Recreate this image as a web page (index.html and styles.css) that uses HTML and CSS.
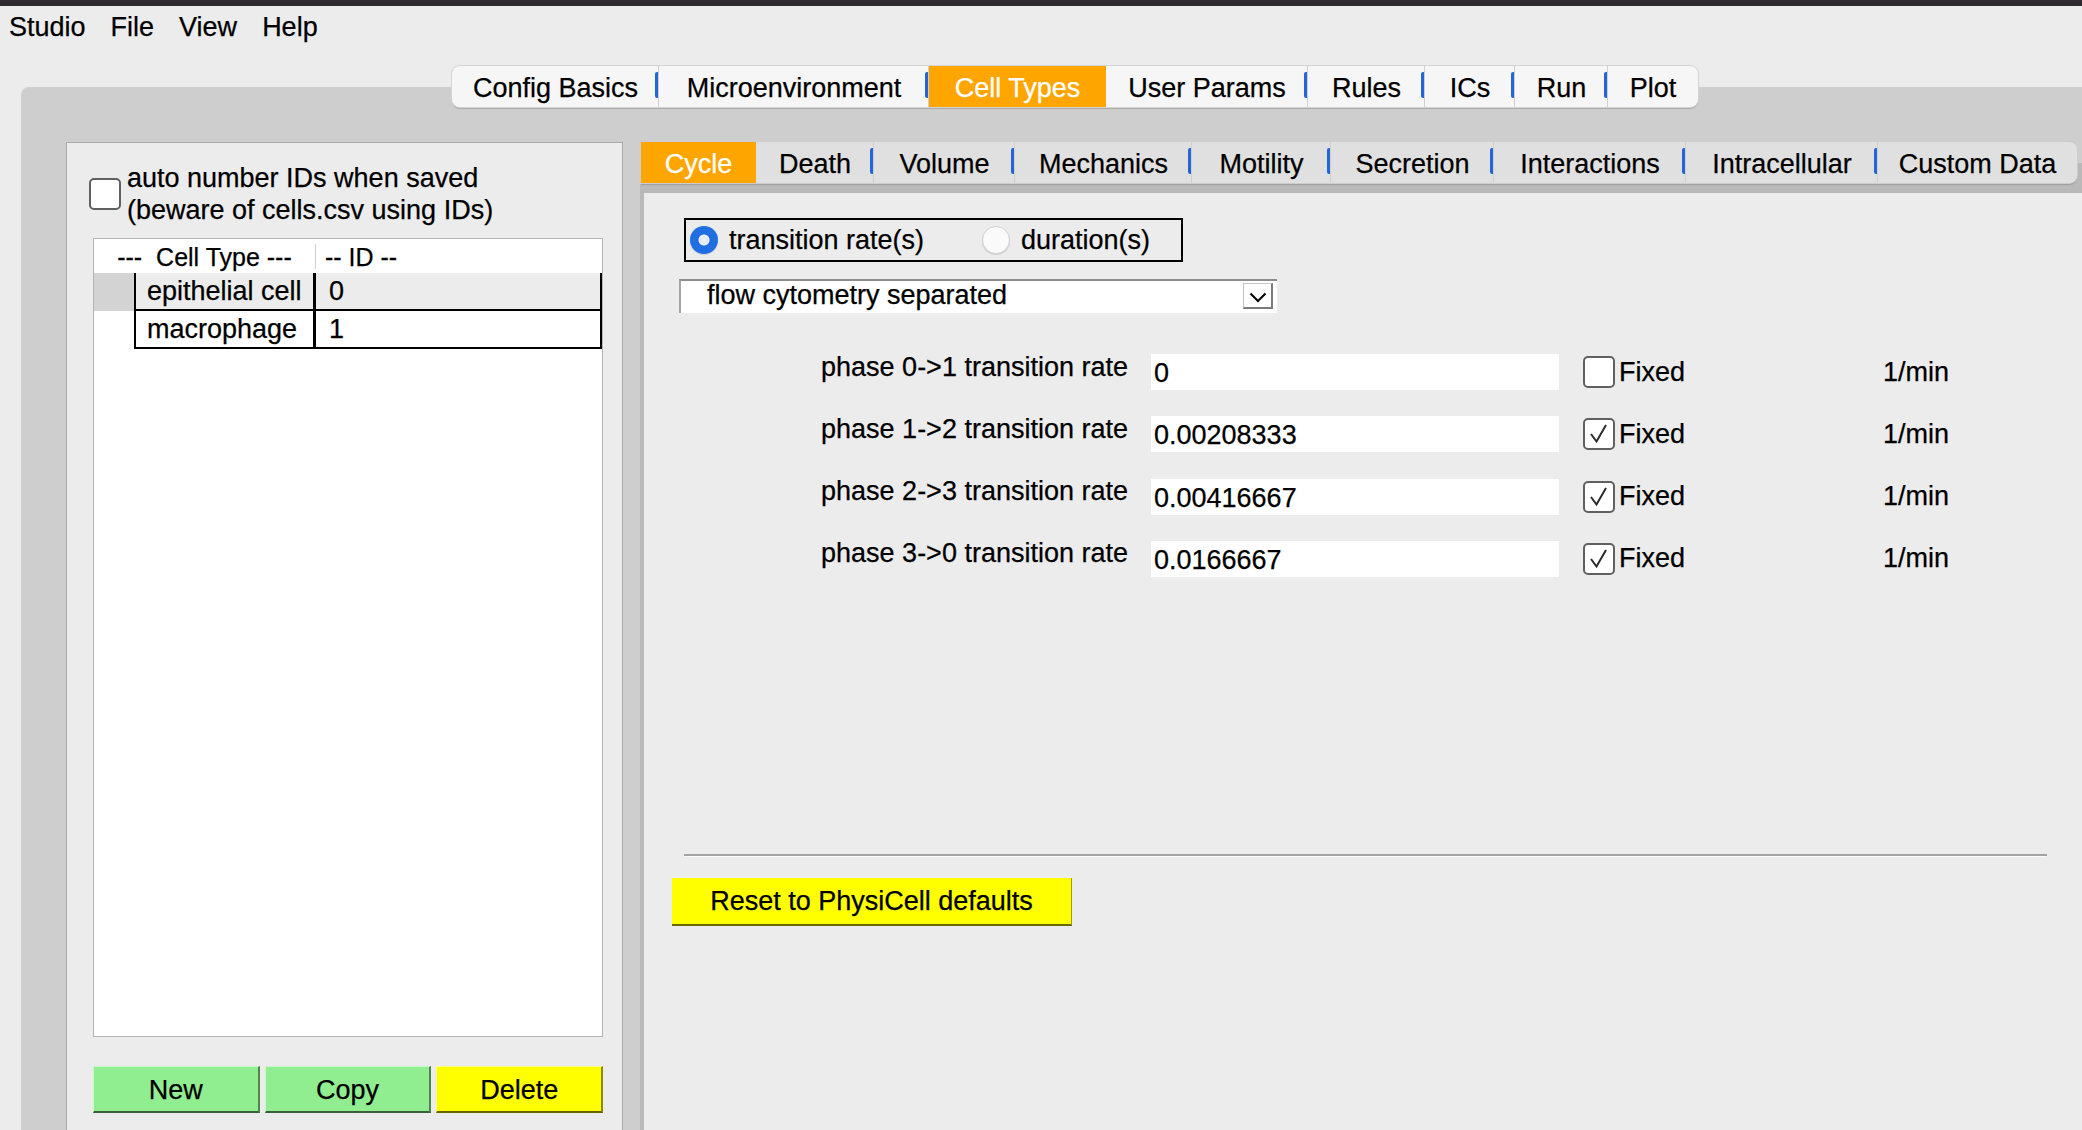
FILE: index.html
```html
<!DOCTYPE html>
<html>
<head>
<meta charset="utf-8">
<link rel="stylesheet" href="styles.css">
</head>
<body>
<div class="topstrip"></div>
<div class="menubar"><span>Studio</span><span>File</span><span>View</span><span>Help</span></div>
<div class="workspace">
  <div class="maintabs">
    <div class="tab sep w207">Config Basics</div>
    <div class="tab sep w270">Microenvironment</div>
    <div class="tab active w177">Cell Types</div>
    <div class="tab sep w202">User Params</div>
    <div class="tab sep w117">Rules</div>
    <div class="tab sep w90">ICs</div>
    <div class="tab sep w93">Run</div>
    <div class="tab w90">Plot</div>
  </div>
  <div class="frame">
    <div class="leftpanel">
      <div class="autorow">
        <div class="cbox"></div>
        <div class="autolabel">auto number IDs when saved<br>(beware of cells.csv using IDs)</div>
      </div>
      <div class="table">
        <div class="thead">
          <div class="hcell h1">---&nbsp; Cell Type ---</div>
          <div class="hcell h2">-- ID --</div>
        </div>
        <div class="trow selrow">
          <div class="gutter"></div>
          <div class="cell c1">epithelial cell</div>
          <div class="cell c2">0</div>
        </div>
        <div class="trow">
          <div class="gutter"></div>
          <div class="cell c1">macrophage</div>
          <div class="cell c2">1</div>
        </div>
      </div>
      <div class="btnrow">
        <div class="btn green">New</div>
        <div class="btn green">Copy</div>
        <div class="btn yellow">Delete</div>
      </div>
    </div>
    <div class="rightpanel">
      <div class="subhead">
        <div class="subtabs">
          <div class="tab active w115">Cycle</div>
          <div class="tab sep w118">Death</div>
          <div class="tab sep w141">Volume</div>
          <div class="tab sep w177">Mechanics</div>
          <div class="tab sep w139">Motility</div>
          <div class="tab sep w163">Secretion</div>
          <div class="tab sep w192">Interactions</div>
          <div class="tab sep w192">Intracellular</div>
          <div class="tab w199">Custom Data</div>
        </div>
      </div>
      <div class="content">
        <div class="radiobox">
          <div class="opt opt1"><span class="radio on"></span><span class="optlabel">transition rate(s)</span></div>
          <div class="opt"><span class="radio"></span><span class="optlabel">duration(s)</span></div>
        </div>
        <div class="combo">
          <span class="combotext">flow cytometry separated</span>
          <span class="arrowbox"><svg width="18" height="11" viewBox="0 0 18 11"><path d="M1.5 1.5 L9 9 L16.5 1.5" fill="none" stroke="#000" stroke-width="2"/></svg></span>
        </div>
        <div class="rows">
          <div class="prow">
            <div class="plabel">phase 0-&gt;1 transition rate</div>
            <div class="pinput">0</div>
            <div class="fixed"><span class="cbox"></span><span class="fixedlabel">Fixed</span></div>
            <div class="unit">1/min</div>
          </div>
          <div class="prow">
            <div class="plabel">phase 1-&gt;2 transition rate</div>
            <div class="pinput">0.00208333</div>
            <div class="fixed"><span class="cbox"><svg width="28" height="28" viewBox="0 0 28 28"><path d="M6 14 L11.5 21.5 L21 5" fill="none" stroke="#2a2a2a" stroke-width="2"/></svg></span><span class="fixedlabel">Fixed</span></div>
            <div class="unit">1/min</div>
          </div>
          <div class="prow">
            <div class="plabel">phase 2-&gt;3 transition rate</div>
            <div class="pinput">0.00416667</div>
            <div class="fixed"><span class="cbox"><svg width="28" height="28" viewBox="0 0 28 28"><path d="M6 14 L11.5 21.5 L21 5" fill="none" stroke="#2a2a2a" stroke-width="2"/></svg></span><span class="fixedlabel">Fixed</span></div>
            <div class="unit">1/min</div>
          </div>
          <div class="prow">
            <div class="plabel">phase 3-&gt;0 transition rate</div>
            <div class="pinput">0.0166667</div>
            <div class="fixed"><span class="cbox"><svg width="28" height="28" viewBox="0 0 28 28"><path d="M6 14 L11.5 21.5 L21 5" fill="none" stroke="#2a2a2a" stroke-width="2"/></svg></span><span class="fixedlabel">Fixed</span></div>
            <div class="unit">1/min</div>
          </div>
        </div>
        <div class="hline"></div>
        <div class="resetbtn">Reset to PhysiCell defaults</div>
      </div>
    </div>
  </div>
</div>
</body>
</html>
```

FILE: styles.css
```css
* { box-sizing: border-box; }
html, body { margin: 0; height: 1130px; overflow: hidden; }
body {
  background: #ececec;
  font-family: "Liberation Sans", Arial, sans-serif;
  font-size: 27px;
  color: #000;
  -webkit-text-stroke: 0.25px currentColor;
}
.topstrip { height: 6px; background: #2e2b2f; }
.menubar {
  height: 42px;
  display: flex;
  gap: 25px;
  padding: 6px 0 0 9px;
  line-height: 30px;
}
.workspace { padding-top: 18px; }

/* tabs */
.maintabs, .subtabs {
  display: flex;
  height: 41px;
  overflow: hidden;
}
.maintabs {
  margin-left: 452px;
  width: 1246px;
  position: relative;
  z-index: 2;
  background: #f6f6f6;
  border-radius: 8px;
  box-shadow: 0 0 0 1px #d4d4d4, 0 2px 1px rgba(0,0,0,0.18);
}
.subtabs {
  margin-left: 1px;
  width: 1436px;
  background: #e0e0e0;
  border-radius: 0 8px 8px 0;
  box-shadow: 0 0 0 1px #cdcdcd, 0 2px 1px rgba(0,0,0,0.15);
}
.tab {
  position: relative;
  display: flex;
  align-items: center;
  justify-content: center;
  height: 100%;
  line-height: 30px;
  padding-top: 2px;
  white-space: nowrap;
  flex: none;
}
.tab.sep::after {
  content: "";
  position: absolute;
  right: 1px;
  top: 6px;
  bottom: 9px;
  width: 3px;
  background: #2465d8;
  border-radius: 2px 0 0 2px;
}
.tab.sep::before {
  content: "";
  position: absolute;
  right: 0;
  top: 0;
  bottom: 0;
  width: 1px;
  background: #cfcfcf;
}
.tab.active { background: #ffa500; color: #fff; }
.w90 { width: 90px; } .w93 { width: 93px; } .w115 { width: 115px; } .w117 { width: 117px; }
.w118 { width: 118px; } .w139 { width: 139px; } .w141 { width: 141px; } .w163 { width: 163px; }
.w177 { width: 177px; } .w192 { width: 192px; } .w199 { width: 199px; } .w202 { width: 202px; }
.w207 { width: 207px; } .w270 { width: 270px; }

/* frame */
.frame {
  margin: -20px 0 0 21px;
  background: #cecece;
  border-top-left-radius: 8px;
  padding: 55px 0 0 45px;
  display: flex;
  gap: 17px;
  height: 1043px;
}

/* left panel */
.leftpanel {
  width: 557px;
  height: 1000px;
  flex: none;
  border: 1px solid #a9a9a9;
  background: #ececec;
  padding: 0 19px 0 22px;
}
.autorow {
  display: flex;
  align-items: flex-start;
  margin-top: 35px;
}
.cbox {
  width: 32px;
  height: 32px;
  flex: none;
  border: 2px solid #606060;
  border-radius: 5px;
  background: #fff;
  display: flex;
  align-items: center;
  justify-content: center;
}
.autolabel {
  margin: -16px 0 0 6px;
  line-height: 32px;
}
.table {
  margin: 12px 0 0 4px;
  width: 510px;
  height: 799px;
  border: 1px solid #b5b5b5;
  background: #fff;
}
.thead {
  height: 34px;
  display: flex;
  align-items: center;
}
.hcell { height: 25px; line-height: 26px; font-size: 25px; white-space: nowrap; }
.h1 { width: 221px; text-align: center; }
.h2 { flex: 1; padding-left: 9px; border-left: 1px solid #cfcfcf; }
.trow { display: flex; height: 38px; }
.gutter { width: 40px; flex: none; }
.cell {
  line-height: 37px;
  border-bottom: 2px solid #000;
  white-space: nowrap;
}
.c1 {
  width: 182px;
  flex: none;
  border-left: 2px solid #000;
  border-right: 3px solid #000;
  padding-left: 11px;
}
.c2 {
  flex: 1;
  border-right: 2px solid #000;
  padding-left: 13px;
}
.selrow .gutter { background: #d3d3d3; }
.selrow .cell { background: #ececec; }
.btnrow {
  display: flex;
  gap: 5px;
  margin: 29px 0 0 4px;
  width: 510px;
}
.btn {
  flex: 1;
  height: 47px;
  display: flex;
  align-items: center;
  justify-content: center;
  padding-top: 3px;
  border-top: 1px solid rgba(255,255,255,0.5);
  border-left: 1px solid rgba(255,255,255,0.5);
  border-right: 2px solid rgba(0,0,0,0.45);
  border-bottom: 2px solid rgba(0,0,0,0.6);
}
.green { background: #90ee90; }
.yellow { background: #ffff00; }

/* right panel */
.rightpanel {
  flex: 1;
  display: flex;
  flex-direction: column;
}
.subhead {
  height: 51px;
  background: linear-gradient(to bottom, #cecece 21px, #b9b9b9 21px);
}
.content {
  flex: 1;
  border-left: 4px solid #b9b9b9;
  background: #ececec;
  padding-top: 25px;
}
.radiobox {
  margin-left: 40px;
  width: 499px;
  height: 44px;
  border: 2px solid #000;
  display: flex;
  align-items: center;
  padding-left: 4px;
}
.opt { display: flex; align-items: center; line-height: 30px; }
.opt1 { width: 292px; }
.radio {
  width: 28px;
  height: 28px;
  border-radius: 50%;
  flex: none;
  background: #fafafa;
  border: 1px solid #d2d2d2;
  box-shadow: 0 1px 1px rgba(0,0,0,0.12);
}
.radio.on {
  border: none;
  background: radial-gradient(circle, #e4eefd 0 5px, #1f6fe2 6px);
}
.optlabel { margin-left: 11px; }
.combo {
  margin: 17px 0 0 35px;
  width: 598px;
  height: 34px;
  background: #fff;
  border-top: 2px solid #8d8d8d;
  border-left: 2px solid #a5a5a5;
  display: flex;
  align-items: flex-start;
}
.combotext { flex: 1; padding-left: 26px; line-height: 28px; }
.arrowbox {
  width: 30px;
  height: 26px;
  margin: 2px 4px 0 0;
  border: 1px solid #c4c4c4;
  border-right: 2px solid #7a7a7a;
  border-bottom: 2px solid #7a7a7a;
  display: flex;
  align-items: center;
  justify-content: center;
  padding-top: 4px;
}
.rows {
  margin-top: 41px;
  display: flex;
  flex-direction: column;
  gap: 26.3px;
}
.prow { display: flex; align-items: center; height: 36px; }
.plabel {
  width: 484px;
  flex: none;
  text-align: right;
  margin-bottom: 10px;
  white-space: nowrap;
}
.pinput {
  margin-left: 23px;
  width: 408px;
  height: 36px;
  flex: none;
  background: #fff;
  padding-left: 3px;
  line-height: 38px;
}
.fixed {
  margin-left: 24px;
  width: 300px;
  flex: none;
  display: flex;
  align-items: center;
}
.fixedlabel { margin-left: 4px; }
.hline {
  margin: 277px 35px 0 40px;
  height: 3px;
  border-top: 2px solid #a3a3a3;
  border-bottom: 1px solid #fafafa;
}
.resetbtn {
  margin: 21px 0 0 28px;
  width: 400px;
  height: 48px;
  background: #ffff00;
  border-bottom: 2px solid #6a6a00;
  border-right: 1px solid #a0a000;
  display: flex;
  align-items: center;
  justify-content: center;
  padding-top: 2px;
}
```
